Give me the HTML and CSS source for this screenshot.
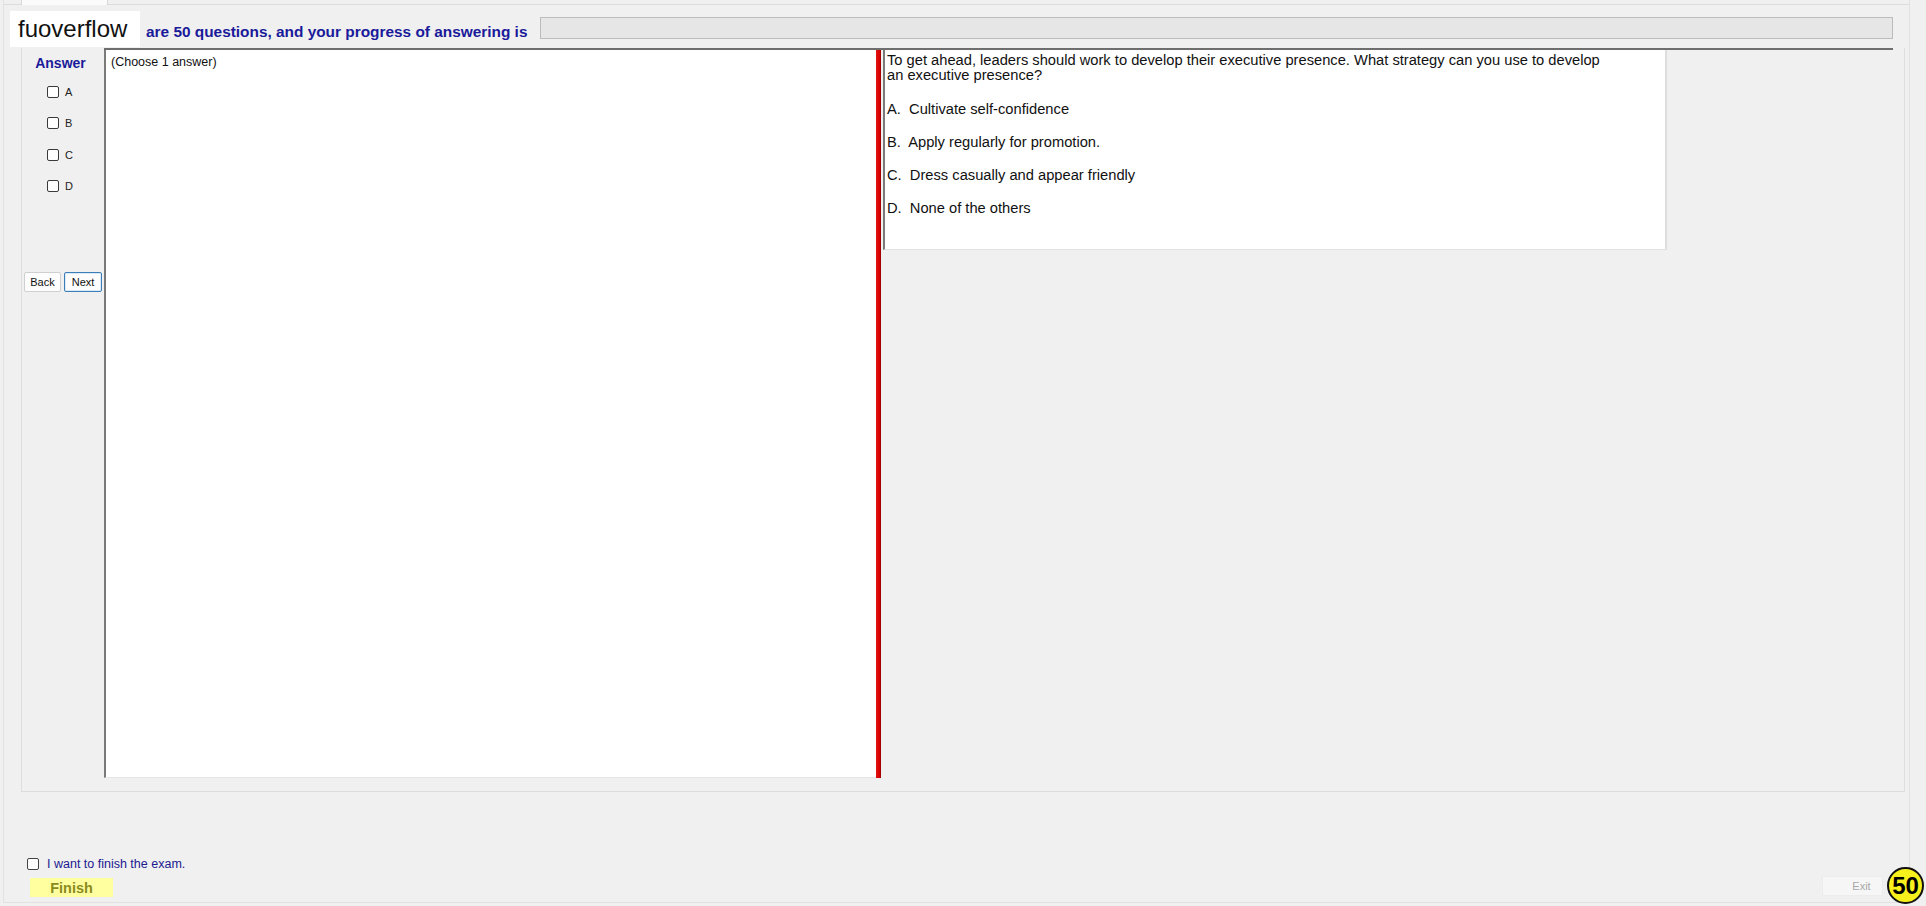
FILE: index.html
```html
<!DOCTYPE html>
<html lang="en">
<head>
    <meta charset="UTF-8">
    <title>Exam</title>
    <link rel="stylesheet" href="styles.css">
</head>
<body>
    <div class="window">
        <div class="tabs">
            <div class="tab"></div>
        </div>

        <div class="header">
            <div class="logo">fuoverflow</div>
            <div class="status">are 50 questions, and your progress of answering is</div>
            <div class="progress"></div>
        </div>

        <div class="group">
            <div class="answers">
                <div class="answers-title">Answer</div>
                <div class="opt-row"><span class="box"></span><span>A</span></div>
                <div class="opt-row"><span class="box"></span><span>B</span></div>
                <div class="opt-row"><span class="box"></span><span>C</span></div>
                <div class="opt-row"><span class="box"></span><span>D</span></div>
                <div class="nav">
                    <button class="btn">Back</button>
                    <button class="btn btn-focus">Next</button>
                </div>
            </div>

            <div class="work">
                <div class="choices">(Choose 1 answer)</div>
                <div class="divider"></div>
                <div class="right">
                    <div class="question">
                        <p class="q-text">To get ahead, leaders should work to develop their executive presence. What strategy can you use to develop<br>an executive presence?</p>
                        <div class="q-opt">A.  Cultivate self-confidence</div>
                        <div class="q-opt">B.  Apply regularly for promotion.</div>
                        <div class="q-opt">C.  Dress casually and appear friendly</div>
                        <div class="q-opt">D.  None of the others</div>
                    </div>
                </div>
            </div>
        </div>

        <div class="footer">
            <div class="finish-block">
                <label class="finish-check"><span class="box"></span>I want to finish the exam.</label>
                <button class="finish">Finish</button>
            </div>
            <button class="exit">Exit</button>
        </div>

        <div class="count">50</div>
    </div>
</body>
</html>
```

FILE: styles.css
```css
* {
    margin: 0;
    padding: 0;
    box-sizing: border-box;
}

body {
    background: #f0f0f0;
    font-family: 'Liberation Sans', Arial, sans-serif;
    color: #111;
    width: 1926px;
    height: 906px;
    overflow: hidden;
}

.window {
    position: relative;
    margin-left: 3px;
    width: 1907px;
    height: 903px;
    border-left: 1px solid #e2e2e2;
    border-right: 1px solid #e2e2e2;
    border-bottom: 1px solid #e2e2e2;
}

.tabs {
    height: 5px;
    border-bottom: 1px solid #dcdcdc;
    padding-left: 17px;
}

.tab {
    width: 87px;
    height: 5px;
    background: #fbfbfb;
    border-left: 1px solid #d8d8d8;
    border-right: 1px solid #d8d8d8;
}

.header {
    height: 43px;
    display: flex;
    align-items: baseline;
    padding: 6px 16px 0 6px;
}

.logo {
    background: #fff;
    width: 130px;
    height: 36px;
    line-height: 36px;
    padding-left: 8px;
    font-size: 24px;
    color: #111;
}

.status {
    margin-left: 6px;
    font-size: 15.4px;
    font-weight: bold;
    color: #1a1a9a;
}

.progress {
    align-self: flex-start;
    margin-top: 6px;
    margin-left: auto;
    width: 1353px;
    height: 22px;
    background: #e6e6e6;
    border: 1px solid #bcbcbc;
}

.group {
    margin-left: 17px;
    width: 1884px;
    height: 744px;
    display: flex;
    border-left: 1px solid #dedede;
    border-right: 1px solid #dedede;
    border-bottom: 1px solid #dcdcdc;
}

.answers {
    width: 82px;
    padding-top: 7px;
}

.answers-title {
    text-align: center;
    padding-right: 5px;
    font-size: 14px;
    line-height: 16px;
    font-weight: bold;
    color: #1a1a9a;
    margin-bottom: 5px;
}

.opt-row {
    height: 31.5px;
    display: flex;
    align-items: center;
    padding-left: 25px;
    font-size: 11px;
    color: #222;
}

.box {
    display: inline-block;
    width: 12px;
    height: 12px;
    background: #fff;
    border: 1px solid #3a3a3a;
    border-radius: 2px;
    margin-right: 6px;
}

.nav {
    margin-top: 70px;
    display: flex;
    gap: 3px;
    padding-left: 2px;
}

.btn {
    height: 20px;
    width: 37px;
    font-family: 'Liberation Sans', Arial, sans-serif;
    font-size: 11px;
    color: #111;
    background: #fdfdfd;
    border: 1px solid #cfcfcf;
    border-radius: 2px;
}

.btn-focus {
    width: 38px;
    border: 1px solid #3c7fb8;
    box-shadow: inset 0 0 0 1px #dbe8f5;
}

.work {
    flex: 1;
    margin-right: 11px;
    height: 730px;
    display: flex;
    border-top: 2px solid #6e6e6e;
}

.choices {
    width: 772px;
    background: #fff;
    border-left: 2px solid #7a7a7a;
    border-bottom: 1px solid #e6e6e6;
    padding: 4px 0 0 5px;
    font-size: 12.5px;
    line-height: 16px;
}

.divider {
    width: 5px;
    background: linear-gradient(90deg, #e41414, #d80000 70%, #8c0000);
}

.right {
    flex: 1;
    padding-left: 2px;
}

.question {
    width: 784px;
    height: 200px;
    background: #fff;
    border-left: 2px solid #7a7a7a;
    border-right: 2px solid #dedede;
    border-bottom: 1px solid #e2e2e2;
    padding: 3px 0 0 2px;
    font-size: 14.7px;
    color: #111;
}

.q-text {
    line-height: 15px;
    margin-bottom: 9.5px;
}

.q-opt {
    line-height: 33.3px;
    white-space: pre;
}

.footer {
    height: 111px;
    display: flex;
    justify-content: space-between;
    align-items: flex-end;
    padding: 0 26px 6px 23px;
}

.finish-check {
    display: flex;
    align-items: center;
    height: 14px;
    font-size: 12.5px;
    color: #201a8f;
}

.finish-check .box {
    margin-right: 8px;
    border-color: #444;
}

.finish {
    display: block;
    margin: 7px 0 0 3px;
    width: 83px;
    height: 19px;
    background: #ffffa0;
    border: none;
    font-family: 'Liberation Sans', Arial, sans-serif;
    font-size: 14.5px;
    font-weight: bold;
    color: #8a8a1c;
}

.exit {
    width: 61px;
    height: 20px;
    margin-bottom: 1px;
    padding-left: 18px;
    background: #f6f6f6;
    border: 1px solid #ececec;
    font-family: 'Liberation Sans', Arial, sans-serif;
    font-size: 11px;
    color: #a8a8a8;
}

.count {
    position: absolute;
    right: -15px;
    bottom: -2px;
    width: 37px;
    height: 37px;
    border-radius: 50%;
    background: #f8f01c;
    border: 2px solid #111;
    display: flex;
    align-items: center;
    justify-content: center;
    font-size: 24px;
    font-weight: bold;
    color: #000;
}
```
